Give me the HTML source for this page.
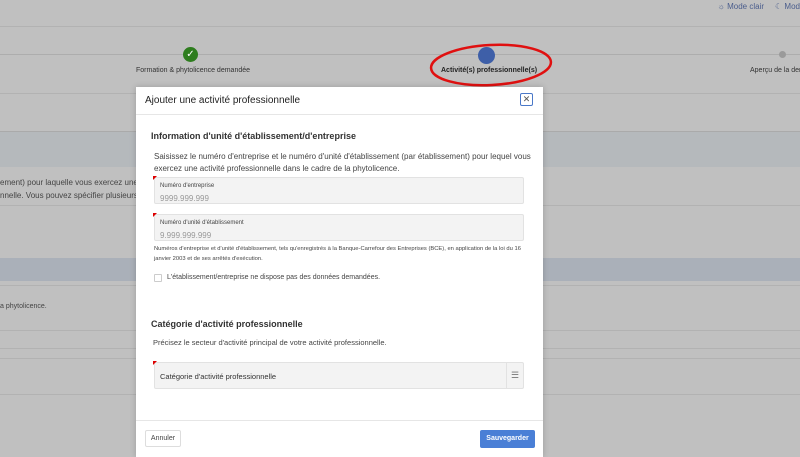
<!DOCTYPE html>
<html><head><meta charset="utf-8"><style>
*{box-sizing:border-box;margin:0;padding:0}
body{width:800px;height:450px;overflow:hidden;background:#c0c0c0;font-family:"Liberation Sans",sans-serif;position:relative;color:#333}
.a{position:absolute}
.hl{position:absolute;left:0;right:0;height:1px;background:#b2b2b2}
.modal{position:absolute;left:136px;top:87px;width:407px;height:370px;background:#fff;box-shadow:0 0 6px rgba(0,0,0,.2)}
.inp{position:absolute;left:18px;width:370px;background:#f3f3f3;border:1px solid #e2e2e2;border-radius:2px}
.lab{font-size:6px;color:#444;position:absolute;left:5px;top:5px}
.ph{font-size:8px;color:#999;position:absolute;left:5px;top:16px}
.req{position:absolute;left:-2px;top:-2px;width:0;height:0;border-top:4px solid #d00;border-right:4px solid transparent}
</style></head><body>
<div class="hl" style="top:26px"></div>
<div class="a" style="right:36px;top:2px;font-size:8px;color:#4a5d8c">☼ Mode clair</div>
<div class="a" style="right:0;top:2px;font-size:8px;color:#4a5d8c">☾ Mod</div>
<div class="hl" style="top:54px;background:#adadad"></div>
<div class="a" style="left:183px;top:47px;width:15px;height:15px;border-radius:50%;background:#2e7d1e;color:#fff;font-size:10px;text-align:center;line-height:15px">✓</div>
<div class="a" style="left:136px;top:67px;font-size:7px;color:#333">Formation &amp; phytolicence demandée</div>
<div class="a" style="left:478px;top:47px;width:17px;height:17px;border-radius:50%;background:#3e5fa8"></div>
<div class="a" style="left:441px;top:67px;font-size:7px;font-weight:bold;color:#222">Activité(s) professionnelle(s)</div>
<svg class="a" style="left:428px;top:42px" width="126" height="46"><ellipse cx="63" cy="23" rx="60" ry="20" fill="none" stroke="#e01010" stroke-width="2.5" transform="rotate(-3 63 23)"/></svg>
<div class="a" style="left:779px;top:51px;width:7px;height:7px;border-radius:50%;background:#9a9a9a"></div>
<div class="a" style="left:750px;top:67px;font-size:7px;color:#333;white-space:nowrap">Aperçu de la dem</div>
<div class="hl" style="top:93px"></div>
<div class="a" style="left:0;right:0;top:131px;height:36px;background:#b5b9bc;border-top:1px solid #aaa"></div>
<div class="a" style="left:0;top:176px;font-size:8px;color:#444;line-height:13px;white-space:nowrap">ement) pour laquelle vous exercez une<br>nnelle. Vous pouvez spécifier plusieurs</div>
<div class="hl" style="top:205px"></div>
<div class="a" style="left:0;right:0;top:258px;height:23px;background:#aab0b9"></div>
<div class="hl" style="top:285px"></div>
<div class="a" style="left:0;top:303px;font-size:7px;color:#444">a phytolicence.</div>
<div class="hl" style="top:330px"></div>
<div class="hl" style="top:348px"></div>
<div class="hl" style="top:358px"></div>
<div class="hl" style="top:394px"></div>

<div class="modal">
 <div class="a" style="left:9px;top:8px;font-size:10px;color:#222">Ajouter une activité professionnelle</div>
 <div class="a" style="left:384px;top:6px;width:13px;height:13px;border:1px solid #4a78c8;border-radius:2px;font-size:9px;color:#555;text-align:center;line-height:11px">✕</div>
 <div class="a" style="left:0;right:0;top:27px;height:1px;background:#e6e6e6"></div>
 <div class="a" style="left:15px;top:44px;font-size:9px;font-weight:bold;color:#333">Information d'unité d'établissement/d'entreprise</div>
 <div class="a" style="left:18px;top:64px;width:380px;font-size:8px;line-height:12px;color:#444">Saisissez le numéro d'entreprise et le numéro d'unité d'établissement (par établissement) pour lequel vous exercez une activité professionnelle dans le cadre de la phytolicence.</div>
 <div class="inp" style="top:90px;height:27px"><div class="req"></div><div class="lab">Numéro d'entreprise</div><div class="ph">9999.999.999</div></div>
 <div class="inp" style="top:127px;height:27px"><div class="req"></div><div class="lab">Numéro d'unité d'établissement</div><div class="ph">9.999.999.999</div></div>
 <div class="a" style="left:18px;top:157px;width:385px;font-size:5.8px;line-height:10px;color:#444">Numéros d'entreprise et d'unité d'établissement, tels qu'enregistrés à la Banque-Carrefour des Entreprises (BCE), en application de la loi du 16 janvier 2003 et de ses arrêtés d'exécution.</div>
 <div class="a" style="left:18px;top:187px;width:8px;height:8px;border:1px solid #ccc;border-radius:1px"></div>
 <div class="a" style="left:31px;top:187px;font-size:7px;color:#444">L'établissement/entreprise ne dispose pas des données demandées.</div>
 <div class="a" style="left:15px;top:232px;font-size:9px;font-weight:bold;color:#333">Catégorie d'activité professionnelle</div>
 <div class="a" style="left:17px;top:251px;font-size:7.5px;color:#444">Précisez le secteur d'activité principal de votre activité professionnelle.</div>
 <div class="inp" style="top:275px;height:27px"><div class="req"></div><div class="a" style="left:5px;top:9px;font-size:7.5px;color:#333">Catégorie d'activité professionnelle</div><div class="a" style="right:0;top:0;width:17px;height:25px;border-left:1px solid #e2e2e2;font-size:9px;color:#777;text-align:center;line-height:25px">☰</div></div>
 <div class="a" style="left:0;right:0;top:333px;height:1px;background:#e6e6e6"></div>
 <div class="a" style="left:9px;top:343px;width:36px;height:17px;border:1px solid #ddd;border-radius:2px;font-size:7px;color:#444;text-align:center;line-height:15px">Annuler</div>
 <div class="a" style="left:344px;top:343px;width:55px;height:18px;background:#4a7fd6;border-radius:2px;font-size:7px;font-weight:bold;color:#fff;text-align:center;line-height:18px">Sauvegarder</div>
</div>
</body></html>
